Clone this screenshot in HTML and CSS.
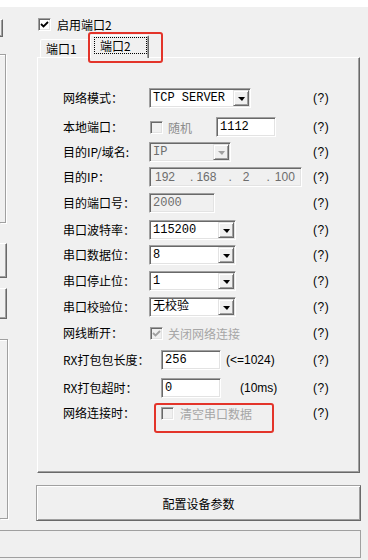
FILE: index.html
```html
<!DOCTYPE html>
<html lang="zh-CN">

<head>
    <meta charset="UTF-8">
    <meta name="viewport" content="width=device-width, initial-scale=1.0">
    <title>端口设置</title>

    <link rel="stylesheet" href="styles.css">
</head>

<body>

    <div class="window">
        <div class="topstrip"></div>

        <div class="main">
            <!-- cut-off controls from the left half of the dialog -->
            <div class="side">
                <div class="stub raised s1"></div>
                <div class="stub etched s2"></div>
                <div class="stub raised s3"></div>
                <div class="stub raised s4"></div>
                <div class="stub etched s5"></div>
            </div>

            <div class="port">
                <div class="enable">
                    <span class="check">
                        <svg width="9" height="9" viewBox="0 0 9 9"><polyline points="1,4 3.5,6.5 8,2" fill="none" stroke="#000" stroke-width="1.8"/></svg>
                    </span>
                    <span>启用端口2</span>
                </div>

                <div class="tabs">
                    <div class="tab">端口1</div>
                    <div class="tab active"><span class="focus">端口2</span></div>
                    <div class="mark tabmark"></div>
                </div>

                <div class="panel">
                    <div class="form">
                        <div class="lbl">网络模式：</div>
                        <div class="ctl">
                            <div class="combo w102"><span class="val">TCP SERVER</span><span class="arrow"><i></i></span></div>
                        </div>
                        <div class="help">(?)</div>

                        <div class="lbl">本地端口：</div>
                        <div class="ctl">
                            <span class="check off first"></span>
                            <span class="dim rnd">随机</span>
                            <div class="edit w60 lport">1112</div>
                        </div>
                        <div class="help">(?)</div>

                        <div class="lbl">目的IP/域名:</div>
                        <div class="ctl">
                            <div class="combo w82 off"><span class="val">IP</span><span class="arrow"><i></i></span></div>
                        </div>
                        <div class="help">(?)</div>

                        <div class="lbl">目的IP：</div>
                        <div class="ctl">
                            <div class="edit off ip">
                                <span class="oct o1">192</span><span class="dot d1">.</span>
                                <span class="oct o2">168</span><span class="dot d2">.</span>
                                <span class="oct o3">2</span><span class="dot d3">.</span>
                                <span class="oct o4">100</span>
                            </div>
                        </div>
                        <div class="help">(?)</div>

                        <div class="lbl">目的端口号：</div>
                        <div class="ctl">
                            <div class="edit w66 off">2000</div>
                        </div>
                        <div class="help">(?)</div>

                        <div class="lbl">串口波特率：</div>
                        <div class="ctl">
                            <div class="combo w87"><span class="val">115200</span><span class="arrow"><i></i></span></div>
                        </div>
                        <div class="help">(?)</div>

                        <div class="lbl">串口数据位：</div>
                        <div class="ctl">
                            <div class="combo w87"><span class="val">8</span><span class="arrow"><i></i></span></div>
                        </div>
                        <div class="help">(?)</div>

                        <div class="lbl">串口停止位：</div>
                        <div class="ctl">
                            <div class="combo w87"><span class="val">1</span><span class="arrow"><i></i></span></div>
                        </div>
                        <div class="help">(?)</div>

                        <div class="lbl">串口校验位：</div>
                        <div class="ctl">
                            <div class="combo w87"><span class="val">无校验</span><span class="arrow"><i></i></span></div>
                        </div>
                        <div class="help">(?)</div>

                        <div class="lbl">网线断开：</div>
                        <div class="ctl">
                            <span class="check off first">
                                <svg width="9" height="9" viewBox="0 0 9 9"><polyline points="1,4 3.5,6.5 8,2" fill="none" stroke="#a0a0a0" stroke-width="1.8"/></svg>
                            </span>
                            <span class="dim light">关闭网络连接</span>
                        </div>
                        <div class="help">(?)</div>

                        <div class="lbl">RX打包包长度：</div>
                        <div class="ctl">
                            <div class="edit w60 rx">256</div>
                            <span class="note n1">(&lt;=1024)</span>
                        </div>
                        <div class="help">(?)</div>

                        <div class="lbl">RX打包超时：</div>
                        <div class="ctl">
                            <div class="edit w60 rx">0</div>
                            <span class="note n2">(10ms)</span>
                        </div>
                        <div class="help">(?)</div>

                        <div class="lbl">网络连接时：</div>
                        <div class="ctl">
                            <span class="check off rxcheck"></span>
                            <span class="dim light clr">清空串口数据</span>
                            <div class="mark rowmark"></div>
                        </div>
                        <div class="help">(?)</div>
                    </div>
                </div>

                <button class="apply">配置设备参数</button>
            </div>
        </div>

        <div class="status"></div>
    </div>

</body>

</html>
```

FILE: styles.css
```css
* {
    box-sizing: border-box;
}

body {
    margin: 0;
    background-color: #f0f0f0;
    color: #000;
    font-family: "Noto Sans CJK SC", "Liberation Sans", sans-serif;
    font-size: 12px;
}

.window {
    width: 368px;
    height: 560px;
    display: flex;
    flex-direction: column;
    overflow: hidden;
}

.topstrip {
    height: 7px;
    background-color: #fff;
}

.main {
    display: flex;
    height: 523px;
}

/* left column stubs */
.side {
    width: 36px;
    display: flex;
    flex-direction: column;
}

.stub {
    border-style: solid;
    border-width: 1px 1px 1px 0;
}

.raised {
    border-color: #fff #696969 #696969 #fff;
    box-shadow: inset -1px -1px #a0a0a0;
}

.etched {
    border-color: #a0a0a0;
    box-shadow: inset 0 1px #fff, 1px 1px #fff;
}

.s1 { width: 3px; height: 18px; margin-top: 12px; }
.s2 { width: 6px; height: 169px; margin-top: 17px; }
.s3 { width: 7px; height: 35px; margin-top: 20px; }
.s4 { width: 7px; height: 31px; margin-top: 10px; }
.s5 { width: 8px; height: 180px; margin-top: 20px; }

/* right column */
.port {
    width: 325px;
    display: flex;
    flex-direction: column;
}

.enable {
    display: flex;
    align-items: center;
    gap: 6px;
    height: 13px;
    margin-top: 11px;
    padding-left: 2px;
    line-height: 13px;
}

.check {
    width: 13px;
    height: 13px;
    flex: none;
    display: inline-flex;
    align-items: center;
    justify-content: center;
    border: 1px solid;
    border-color: #a0a0a0 #fff #fff #a0a0a0;
    box-shadow: inset 1px 1px #696969, inset -1px -1px #e3e3e3;
    background-color: #fff;
}

.check.off {
    background-color: #f0f0f0;
}

.tabs {
    position: relative;
    display: flex;
    align-items: flex-end;
    height: 24px;
    margin-top: 2px;
    padding-left: 4px;
}

.tab {
    width: 52px;
    height: 18px;
    padding-left: 5px;
    line-height: 17px;
    border-style: solid;
    border-width: 1px 1px 0 1px;
    border-color: #fff #696969 transparent #fff;
    border-radius: 2px 2px 0 0;
    box-shadow: inset -1px 0 #a0a0a0;
    background-color: #f0f0f0;
}

.tab.active {
    position: relative;
    z-index: 1;
    width: 59px;
    height: 23px;
    margin-left: -2px;
    margin-bottom: -1px;
    padding: 1px 0 0 3px;
}

.focus {
    display: inline-block;
    width: 53px;
    height: 17px;
    padding-left: 5px;
    line-height: 15px;
    border: 1px dotted #000;
}

/* red annotation frames */
.mark {
    position: absolute;
    border: 2px solid #e3342a;
    border-radius: 3px;
    pointer-events: none;
}

.tabmark {
    left: 52px;
    top: -1px;
    width: 75px;
    height: 31px;
    z-index: 2;
}

.rowmark {
    left: 5px;
    top: 0;
    width: 120px;
    height: 30px;
}

.panel {
    width: 323px;
    height: 416px;
    margin-left: 1px;
    padding: 30px 0 0 25px;
    border: 1px solid;
    border-color: #fff #696969 #696969 #fff;
    box-shadow: inset -1px -1px #a0a0a0;
}

.form {
    display: grid;
    grid-template-columns: 86px 164px auto;
    grid-template-rows: 29px 25px 25px 26px 27px 25px 26px 26px 26px 27px 28px 25px 20px;
    align-items: start;
}

.lbl {
    line-height: 20px;
    white-space: nowrap;
}

.ctl {
    position: relative;
    display: flex;
    align-items: center;
    height: 20px;
}

.help {
    line-height: 20px;
    font-family: "Liberation Sans", sans-serif;
    font-size: 12px;
    letter-spacing: 0.5px;
}

.dim {
    color: #8c8c8c;
    white-space: nowrap;
}

.dim.light {
    color: #a6a6a6;
}

.first { margin-left: 1px; }
.rnd { margin-left: 5px; }
.lport { margin-left: 24px; }
.check.first + .light { margin-left: 5px; }
.rxcheck { margin-left: 12px; }
.clr { margin-left: 6px; }

/* edit boxes and combos */
.edit,
.combo {
    height: 20px;
    border: 1px solid;
    border-color: #a0a0a0 #fff #fff #a0a0a0;
    box-shadow: inset 1px 1px #696969, inset -1px -1px #e3e3e3;
    background-color: #fff;
    font-family: "Liberation Mono", "Noto Sans CJK SC", monospace;
    font-size: 12px;
    line-height: 18px;
    white-space: nowrap;
}

.edit {
    padding-left: 3px;
}

.edit.off,
.combo.off {
    background-color: #f0f0f0;
    color: #6d6d6d;
}

.w60 { width: 60px; }
.w66 { width: 66px; }
.w82 { width: 82px; }
.w87 { width: 87px; }
.w102 { width: 102px; }

.rx { margin-left: 12px; }

.combo {
    display: flex;
    padding: 1px;
}

.val {
    flex: 1;
    padding-left: 2px;
    line-height: 16px;
}

.arrow {
    width: 16px;
    height: 16px;
    display: flex;
    align-items: center;
    justify-content: center;
    border: 1px solid;
    border-color: #e3e3e3 #696969 #696969 #e3e3e3;
    box-shadow: inset 1px 1px #fff, inset -1px -1px #a0a0a0;
    background-color: #f0f0f0;
}

.arrow i {
    width: 0;
    height: 0;
    margin-top: 1px;
    border-top: 4px solid #000;
    border-left: 4px solid transparent;
    border-right: 3px solid transparent;
}

.combo.off .arrow i {
    border-top-color: #a0a0a0;
}

.ip {
    display: flex;
    width: 153px;
    padding-left: 0;
    font-family: "Liberation Sans", sans-serif;
}

.oct,
.dot {
    line-height: 18px;
}

.o1 { margin-left: 5px; }
.d1 { margin-left: 15px; }
.o2 { margin-left: 3px; }
.d2 { margin-left: 12px; }
.o3 { margin-left: 11px; }
.d3 { margin-left: 17px; }
.o4 { margin-left: 5px; }

.note {
    font-family: "Liberation Sans", sans-serif;
    font-size: 12px;
    white-space: nowrap;
}

.n1 { margin-left: 5px; }
.n2 { margin-left: 19px; }

.apply {
    width: 325px;
    height: 36px;
    margin-top: 12px;
    padding: 0;
    border: 1px solid;
    border-color: #a0a0a0 #696969 #696969 #a0a0a0;
    box-shadow: inset 1px 1px #fff, inset -1px -1px #a0a0a0;
    background-color: #f0f0f0;
    font-family: "Noto Sans CJK SC", sans-serif;
    font-size: 12px;
    color: #000;
}

.status {
    width: 361px;
    height: 28px;
    border-style: solid;
    border-width: 1px 1px 1px 0;
    border-color: #a0a0a0;
}
```
